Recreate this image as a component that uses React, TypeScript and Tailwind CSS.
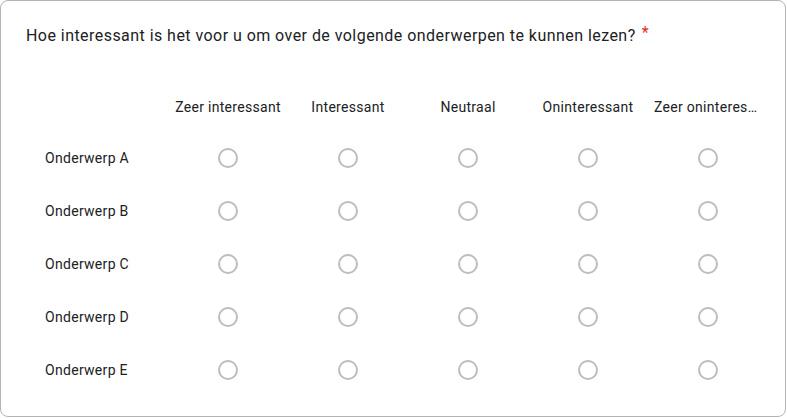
import React from "react";

const columns = [
  "Zeer interessant",
  "Interessant",
  "Neutraal",
  "Oninteressant",
  "Zeer oninteressant",
];

const rows = ["Onderwerp A", "Onderwerp B", "Onderwerp C", "Onderwerp D", "Onderwerp E"];

const Radio: React.FC = () => (
  <div className="w-5 h-5 rounded-full border-2 border-[#bdbdbd] bg-white" />
);

const App: React.FC = () => {
  return (
    <div
      className="w-[787px] h-[418px] bg-white"
      style={{ fontFamily: "Roboto, Arial, sans-serif" }}
    >
      <div className="w-[786px] h-[417px] border border-[#b4b4b4] rounded-lg bg-white pt-[23px] pl-[25px] pr-[18px]">
        <div className="flex items-start text-base leading-6 tracking-[0.45px] text-[#202124]">
          <span>
            Hoe interessant is het voor u om over de volgende onderwerpen te kunnen lezen?
          </span>
          <span className="ml-[6px] -mt-[3px] text-[#d93025]">*</span>
        </div>

        <div className="mt-[35px] ml-[19px]">
          {/* header */}
          <div className="flex h-[48px] items-center">
            <div className="w-[123px] shrink-0" />
            {columns.map((c) => (
              <div
                key={c}
                className="w-[120px] shrink-0 px-[6px] text-center text-sm tracking-[0.3px] text-[#202124] truncate"
              >
                {c}
              </div>
            ))}
          </div>
          {/* rows */}
          {rows.map((r) => (
            <div key={r} className="flex h-[53px] items-center">
              <div className="w-[123px] shrink-0 text-sm tracking-[0.3px] text-[#202124]">{r}</div>
              {columns.map((c) => (
                <div key={c} className="w-[120px] shrink-0 flex justify-center">
                  <Radio />
                </div>
              ))}
            </div>
          ))}
        </div>
      </div>
    </div>
  );
};

export default App;
